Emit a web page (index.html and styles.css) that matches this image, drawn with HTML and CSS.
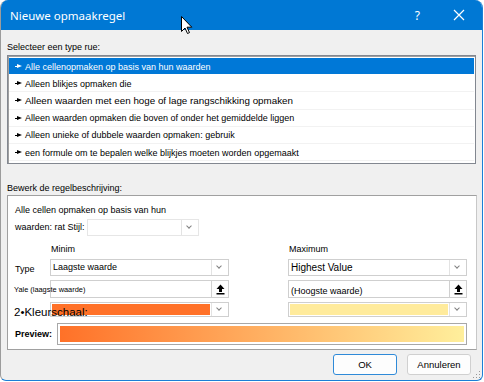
FILE: index.html
```html
<!DOCTYPE html>
<html lang="nl">
  <head>
    <meta charset="utf-8">
    <title>Nieuwe opmaakregel</title>
    <link rel="stylesheet" href="styles.css">
  </head>
  <body>
    <div class="window">
      <div class="titlebar">
        <span class="title">Nieuwe opmaakregel</span>
        <span class="help">?</span>
        <svg class="close" width="12" height="12" viewBox="0 0 12 12">
          <path d="M1 1 L11 11 M11 1 L1 11" stroke="#fff" stroke-width="1.2"/>
        </svg>
      </div>

      <div class="content">
        <div class="label">Selecteer een type rue:</div>
        <ul class="rules">
          <li class="selected"><span class="bullet"></span>Alle cellenopmaken op basis van hun waarden</li>
          <li><span class="bullet"></span>Alleen blikjes opmaken die</li>
          <li class="big"><span class="bullet"></span>Alleen waarden met een hoge of lage rangschikking opmaken</li>
          <li><span class="bullet"></span>Alleen waarden opmaken die boven of onder het gemiddelde liggen</li>
          <li><span class="bullet"></span>Alleen unieke of dubbele waarden opmaken: gebruik</li>
          <li><span class="bullet"></span>een formule om te bepalen welke blijkjes moeten worden opgemaakt</li>
        </ul>

        <div class="label label-edit">Bewerk de regelbeschrijving:</div>
        <div class="panel">
          <div class="desc">Alle cellen opmaken op basis van hun</div>
          <div class="style-row">
            waarden: rat Stijl:
            <div class="combo stijl"><span class="arrow"></span></div>
          </div>

          <div class="grid">
            <div class="head col-min">Minim</div>
            <div class="head col-max">Maximum</div>

            <div class="row-label">Type</div>
            <div class="combo type-row col-min"><span class="value">Laagste waarde</span><span class="arrow"></span></div>
            <div class="combo type-row col-max"><span class="value">Highest Value</span><span class="arrow"></span></div>

            <div class="input col-min">
              <span class="pick">
                <svg width="9" height="11" viewBox="0 0 9 11"><path d="M4.5 0.5 L8.5 5 L6 5 L6 8 L3 8 L3 5 L0.5 5 Z" fill="#000"/><rect x="0.5" y="9" width="8" height="1.5" fill="#000"/></svg>
              </span>
            </div>
            <div class="tiny">Yale (laagste waarde)</div>
            <div class="input col-max">
              <span class="value">(Hoogste waarde)</span>
              <span class="pick">
                <svg width="9" height="11" viewBox="0 0 9 11"><path d="M4.5 0.5 L8.5 5 L6 5 L6 8 L3 8 L3 5 L0.5 5 Z" fill="#000"/><rect x="0.5" y="9" width="8" height="1.5" fill="#000"/></svg>
              </span>
            </div>

            <div class="combo color col-min"><span class="swatch orange"></span><span class="arrow"></span></div>
            <div class="scale">2•Kleurschaal:</div>
            <div class="combo color col-max"><span class="swatch yellow"></span><span class="arrow"></span></div>
          </div>

          <div class="preview-row">
            <span class="preview-label">Preview:</span>
            <div class="preview"><div class="gradient"></div></div>
          </div>
        </div>

        <div class="buttons">
          <button class="btn default">OK</button>
          <button class="btn">Annuleren</button>
        </div>
      </div>

      <svg class="grip" width="8" height="8" viewBox="0 0 8 8">
        <rect x="6" y="0" width="1" height="1" fill="#999"/>
        <rect x="3" y="3" width="1" height="1" fill="#999"/>
        <rect x="6" y="3" width="1" height="1" fill="#999"/>
        <rect x="0" y="6" width="1" height="1" fill="#999"/>
        <rect x="3" y="6" width="1" height="1" fill="#999"/>
        <rect x="6" y="6" width="1" height="1" fill="#999"/>
      </svg>

      <!-- mouse pointer over the title bar -->
      <svg class="cursor" width="12" height="19" viewBox="0 0 12 19">
        <path d="M0.5 0.5 L0.5 15.5 L4 12 L6.5 17.5 L8.5 16.6 L6 11.2 L10.8 11.2 Z" fill="#fff" stroke="#000" stroke-width="1"/>
      </svg>
    </div>
  </body>
</html>
```

FILE: styles.css
```css
body {
  margin: 0;
  background-color: #ffffff;
  font-family: "Liberation Sans", Arial, sans-serif;
  color: #000000;
}
.window {
  position: relative;
  width: 481px;
  height: 380px;
  background-color: #f0f0f0;
  border: 1px solid #1c7fd6;
  border-left-color: #9c9c9c;
  border-top: none;
  border-radius: 8px 8px 6px 6px;
  overflow: hidden;
}
.titlebar {
  display: flex;
  align-items: center;
  height: 30px;
  padding-left: 9px;
  background-color: #0078d4;
  color: #ffffff;
}
.title {
  font-family: "Noto Sans", sans-serif;
  font-size: 11.5px;
  flex: 1;
}
.help {
  font-family: "Noto Sans", sans-serif;
  font-size: 12px;
  margin-right: 33px;
}
.close {
  margin-right: 17px;
}
.content {
  padding: 11px 6px 0 6px;
}
.label {
  font-size: 9px;
  line-height: 12px;
  height: 12px;
  margin-bottom: 2px;
}
.label-edit {
  margin-top: 18px;
  margin-bottom: 1px;
}
.rules {
  list-style: none;
  margin: 0;
  padding: 2px 1px 2px 1px;
  height: 103px;
  background-color: #ffffff;
  border: 1px solid #828790;
  box-shadow: inset 1px 1px 0 #a0a0a0;
  width: 465px;
}
.rules li {
  display: flex;
  align-items: center;
  box-sizing: border-box;
  height: 17.2px;
  padding-left: 6px;
  padding-top: 1px;
  font-size: 9px;
  border-bottom: 1px solid #f2f2f2;
}
.rules li.big {
  font-size: 9.8px;
}
.rules li.selected {
  background-color: #0078d7;
  color: #ffffff;
  height: 16.2px;
  margin-bottom: 1px;
  border-bottom: none;
}
.bullet {
  position: relative;
  width: 7px;
  height: 5px;
  margin-right: 3px;
}
.bullet::before {
  content: "";
  position: absolute;
  left: 0;
  top: 2px;
  width: 3px;
  height: 1px;
  background-color: currentColor;
}
.bullet::after {
  content: "";
  position: absolute;
  left: 2px;
  top: 0;
  border-left: 5px solid currentColor;
  border-top: 2.5px solid transparent;
  border-bottom: 2.5px solid transparent;
}
.panel {
  box-sizing: border-box;
  width: 470px;
  height: 155px;
  padding: 7px 7px 0 7px;
  background-color: #ffffff;
  border: 1px solid #a0a0a0;
  border-right-color: #c8c8c8;
  font-size: 9px;
}
.desc {
  line-height: 14px;
}
.style-row {
  display: flex;
  align-items: center;
  height: 18px;
  margin-top: 1px;
}
.combo {
  display: flex;
  box-sizing: border-box;
  height: 17px;
  border: 1px solid #cfcfcf;
  background-color: #ffffff;
}
.combo .value {
  flex: 1;
  padding-left: 2px;
  line-height: 15px;
  font-size: 9px;
}
.col-max .value {
  font-size: 10px;
}
.arrow {
  position: relative;
  width: 16px;
  margin-left: auto;
  border-left: 1px solid #e3e3e3;
}
.arrow::after {
  content: "";
  position: absolute;
  left: 5px;
  top: 4px;
  width: 3px;
  height: 3px;
  border-right: 1px solid #808080;
  border-bottom: 1px solid #808080;
  transform: rotate(45deg);
}
.color .arrow::after {
  top: 3px;
}
.stijl {
  width: 112px;
  margin-left: 2px;
  border-color: #e6e6e6;
}
.grid {
  display: grid;
  grid-template-columns: 35px 179px 59px 179px;
  grid-template-rows: 13px 17px 18px 15px;
  row-gap: 4px;
  margin-top: 6px;
}
.head {
  grid-row: 1;
  align-self: end;
  line-height: 12px;
  padding-left: 1px;
}
.col-min {
  grid-column: 2;
}
.col-max {
  grid-column: 4;
}
.row-label {
  grid-row: 2;
  grid-column: 1;
  align-self: center;
  margin-top: 2px;
}
.type-row {
  grid-row: 2;
}
.grid .input {
  grid-row: 3;
}
.grid .color {
  grid-row: 4;
  height: 15px;
}
.input {
  display: flex;
  align-items: flex-end;
  box-sizing: border-box;
  height: 18px;
  border: 1px solid #cfcfcf;
  background-color: #ffffff;
}
.input .value {
  flex: 1;
  padding-left: 2px;
  padding-bottom: 1px;
  font-size: 9px;
}
.pick {
  display: flex;
  align-items: center;
  justify-content: center;
  align-self: stretch;
  width: 16px;
  margin-left: auto;
  border-left: 1px solid #d0d0d0;
  background-color: #fdfdfd;
}
.tiny {
  grid-row: 3;
  grid-column: 1 / span 2;
  align-self: center;
  font-size: 7.4px;
  margin-left: -1px;
  margin-top: 1px;
}
.swatch {
  flex: 1;
  margin: 1px;
}
.orange {
  background-color: #ff7128;
}
.yellow {
  background-color: #ffeb9c;
}
.scale {
  grid-row: 4;
  grid-column: 1 / span 2;
  align-self: center;
  font-size: 11.5px;
  margin-left: -1px;
  margin-top: 5px;
}
.preview-row {
  display: flex;
  align-items: center;
  margin-top: 6px;
}
.preview-label {
  font-weight: 700;
  width: 42px;
  font-size: 9px;
}
.preview {
  box-sizing: border-box;
  width: 410px;
  height: 22px;
  padding: 2px;
  border: 1px solid #a8a8a8;
  background-color: #ffffff;
}
.gradient {
  height: 100%;
  background: linear-gradient(to right, #ff7128, #ffef9c);
}
.buttons {
  display: flex;
  justify-content: flex-end;
  gap: 10px;
  margin-top: 4px;
  padding-right: 5px;
}
.btn {
  box-sizing: border-box;
  width: 64px;
  height: 21px;
  padding: 0;
  font-family: "Liberation Sans", Arial, sans-serif;
  font-size: 9.5px;
  color: #000;
  background-color: #fdfdfd;
  border: 1px solid #d0d0d0;
  border-radius: 3px;
}
.btn.default {
  border: 1.5px solid #2f8ad8;
}
.grip {
  position: absolute;
  right: 1px;
  bottom: 1px;
}
.cursor {
  position: absolute;
  left: 180px;
  top: 16px;
}
```
